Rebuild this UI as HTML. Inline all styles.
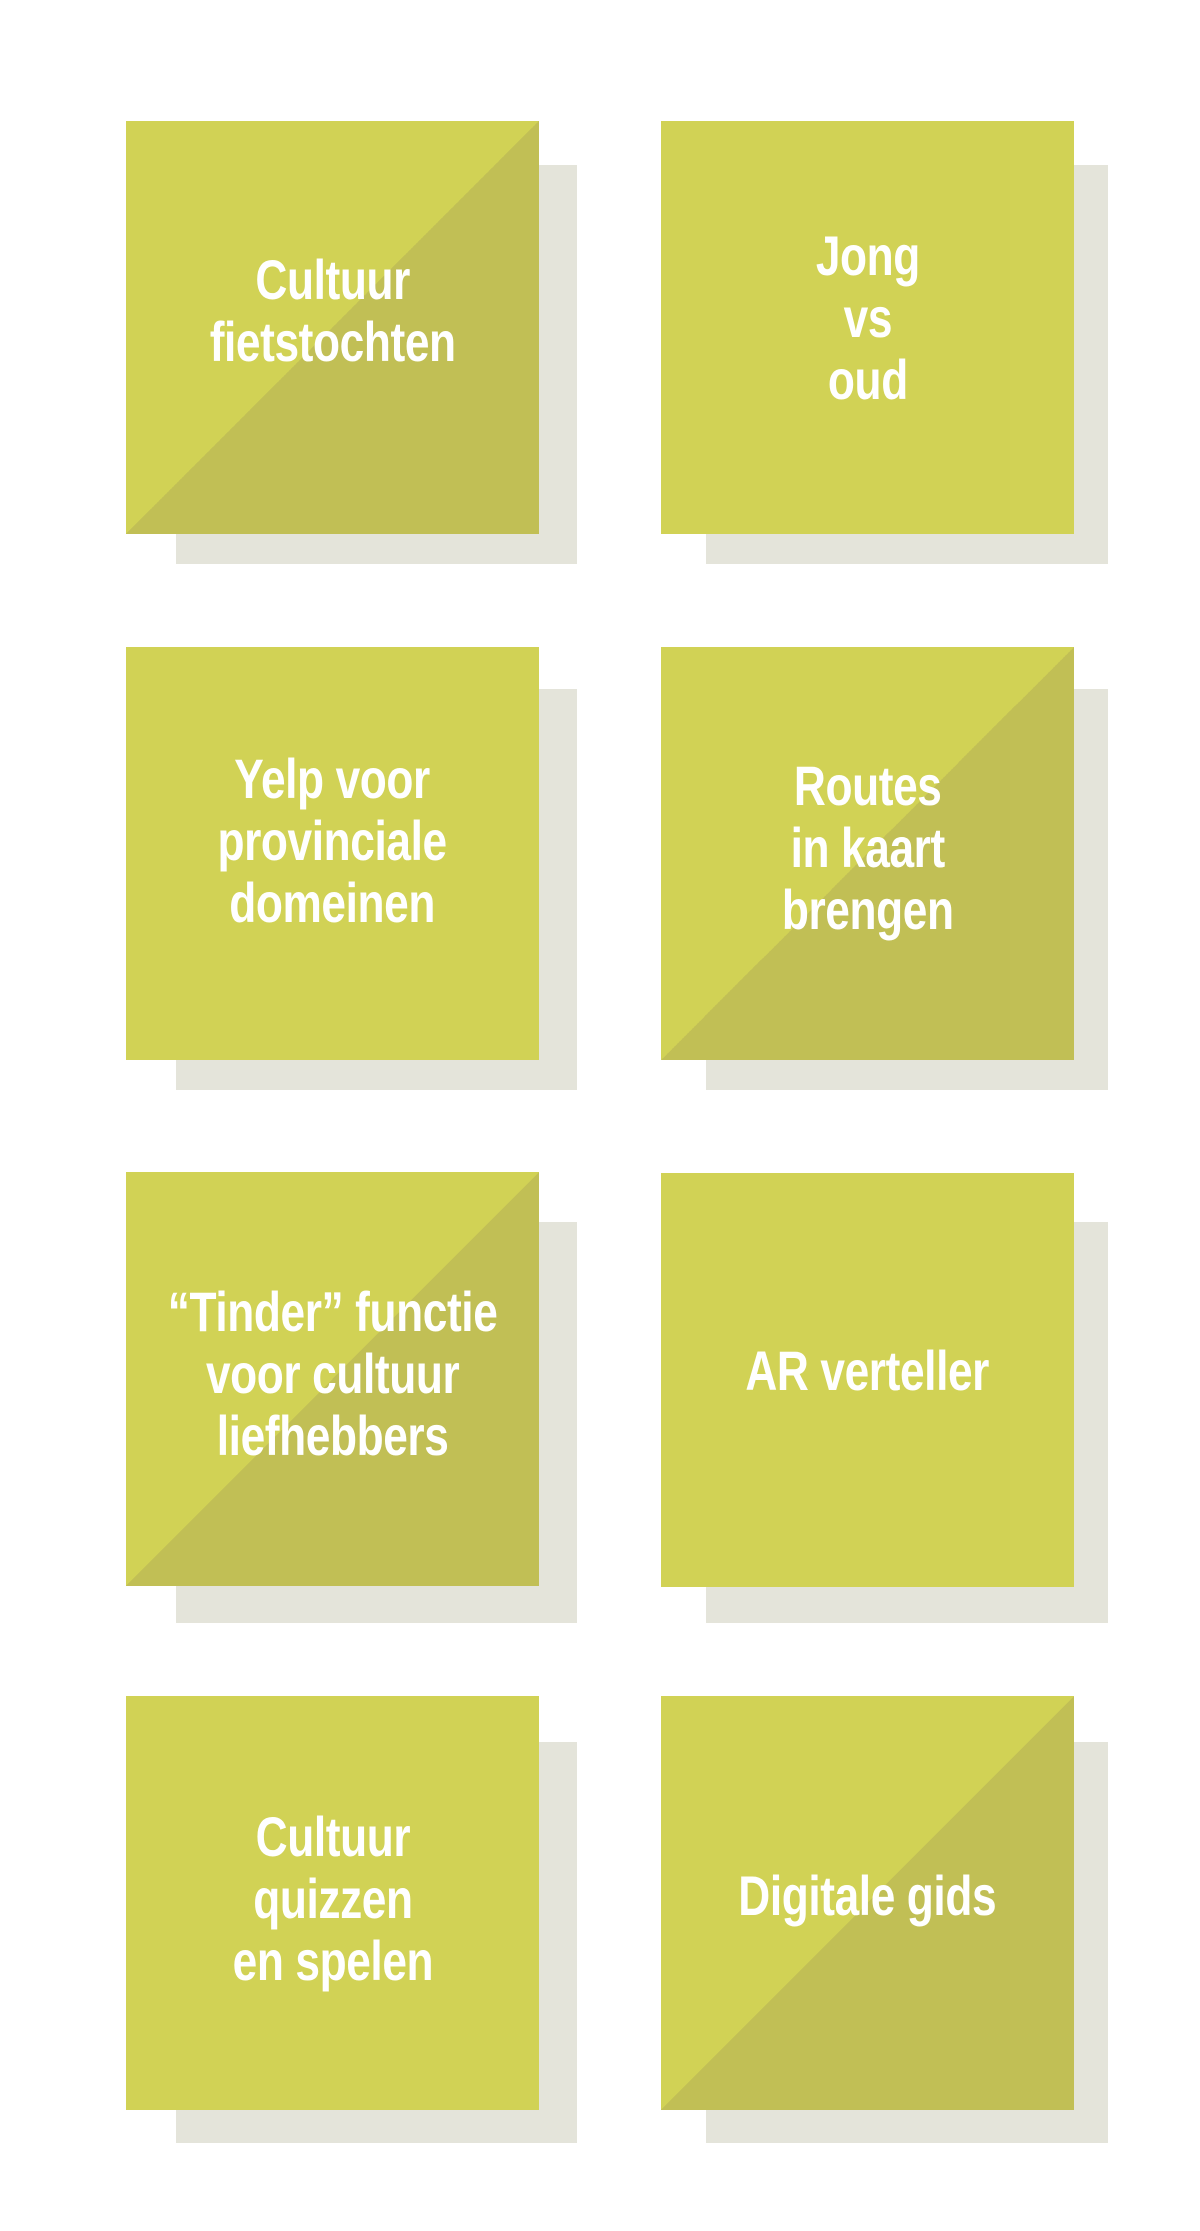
<!DOCTYPE html>
<html><head><meta charset="utf-8"><style>
html,body{margin:0;padding:0;background:#fff;}
body{width:1200px;height:2231px;position:relative;overflow:hidden;}
.sh{position:absolute;background:#e4e4da;}
.bx{position:absolute;width:413px;height:413px;background:#d1d255;overflow:hidden;}
.bx.d{background:linear-gradient(to top left,#c1bf55 50%,#d1d255 50%);}
.t{position:absolute;left:0;top:0;width:100%;height:100%;display:flex;align-items:center;justify-content:center;box-sizing:border-box;}
.t div{font-family:"Liberation Sans Narrow","Liberation Sans",sans-serif;font-weight:bold;color:#fff;font-size:56px;line-height:62px;text-align:center;transform:scaleX(0.79);white-space:nowrap;letter-spacing:-0.5px;}
</style></head><body>

<div class="sh" style="left:176px;top:165px;width:401px;height:399px"></div>
<div class="sh" style="left:706px;top:165px;width:402px;height:399px"></div>
<div class="sh" style="left:176px;top:689px;width:401px;height:401px"></div>
<div class="sh" style="left:706px;top:689px;width:402px;height:401px"></div>
<div class="sh" style="left:176px;top:1222px;width:401px;height:401px"></div>
<div class="sh" style="left:706px;top:1222px;width:402px;height:401px"></div>
<div class="sh" style="left:176px;top:1742px;width:401px;height:401px"></div>
<div class="sh" style="left:706px;top:1742px;width:402px;height:401px"></div>

<div class="bx d" style="left:126px;top:121px"><div class="t" style="padding-bottom:34px"><div>Cultuur<br>fietstochten</div></div></div>
<div class="bx" style="left:661px;top:121px"><div class="t" style="padding-bottom:20px"><div>Jong<br>vs<br>oud</div></div></div>

<div class="bx" style="left:126px;top:647px"><div class="t" style="padding-bottom:26px"><div>Yelp voor<br>provinciale<br>domeinen</div></div></div>
<div class="bx d" style="left:661px;top:647px"><div class="t" style="padding-bottom:12px"><div>Routes<br>in kaart<br>brengen</div></div></div>

<div class="bx d" style="left:126px;top:1172px;height:414px"><div class="t" style="padding-bottom:10px"><div>“Tinder” functie<br>voor cultuur<br>liefhebbers</div></div></div>
<div class="bx" style="left:661px;top:1173px;height:414px"><div class="t" style="padding-bottom:18px"><div>AR verteller</div></div></div>

<div class="bx" style="left:126px;top:1696px;height:414px"><div class="t" style="padding-bottom:8px"><div>Cultuur<br>quizzen<br>en spelen</div></div></div>
<div class="bx d" style="left:661px;top:1696px;height:414px"><div class="t" style="padding-bottom:14px"><div>Digitale gids</div></div></div>

</body></html>
